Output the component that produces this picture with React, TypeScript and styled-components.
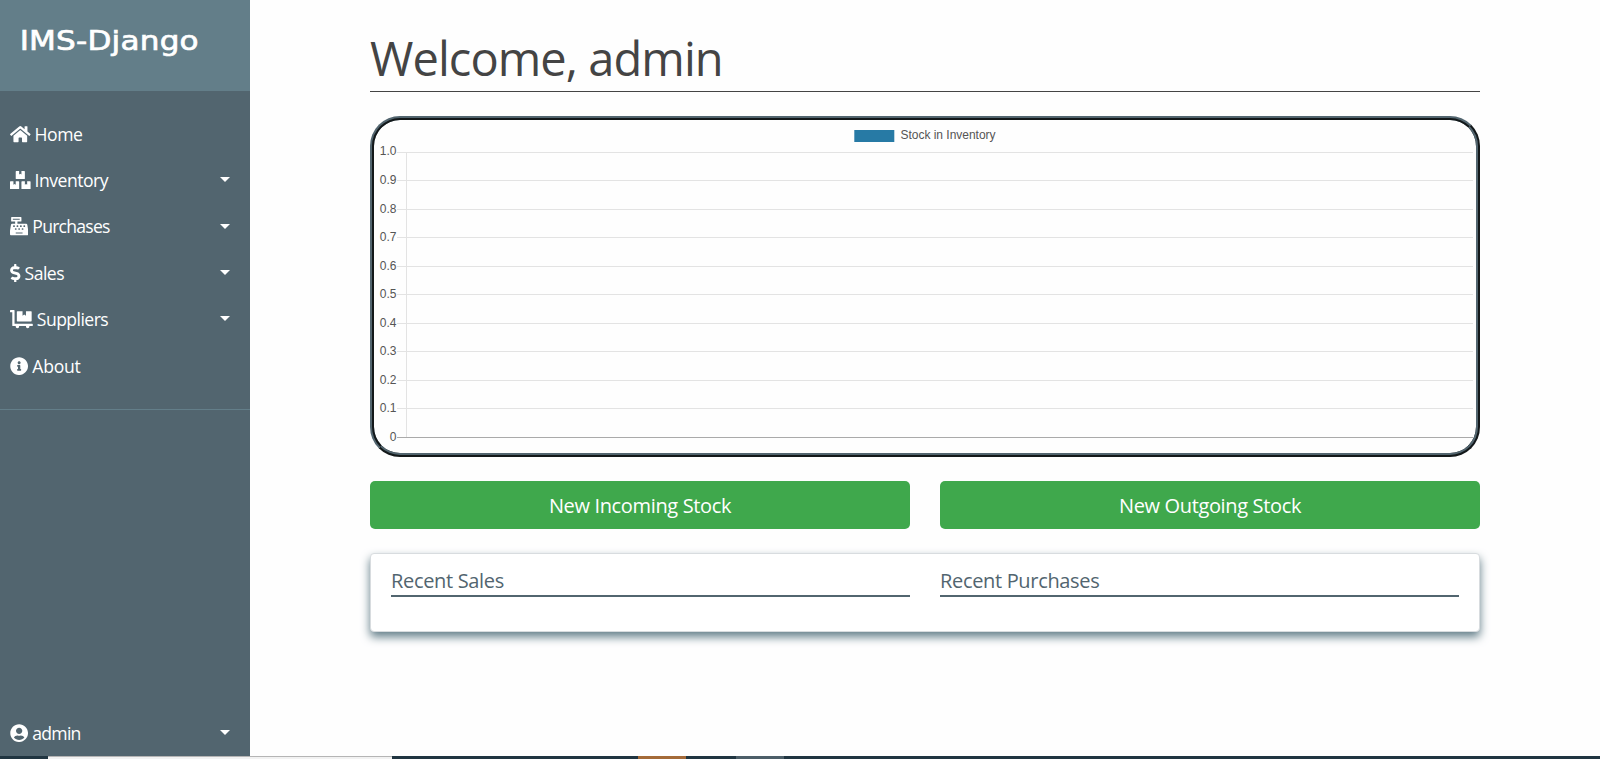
import React from "react";
import styled, { createGlobalStyle } from "styled-components";
import {
  FaHome,
  FaBoxes,
  FaCashRegister,
  FaDollarSign,
  FaDollyFlatbed,
  FaInfoCircle,
  FaUserCircle,
} from "react-icons/fa";
import type { IconType } from "react-icons";

const GlobalStyle = createGlobalStyle`
  *, *::before, *::after { box-sizing: border-box; }
  body {
    margin: 0;
    background: #fefefe;
    font-family: "Open Sans", "Noto Sans", sans-serif;
    font-size: 16px;
    line-height: 1.5;
    overflow: hidden;
  }
`;

const Screen = styled.div`
  display: flex;
  flex-direction: column;
  height: 759px;
`;

const Layout = styled.div`
  display: flex;
  height: 756px;
`;

const Sidebar = styled.nav`
  display: flex;
  flex-direction: column;
  flex: none;
  width: 250px;
  background: #52656f;
  color: #fff;
`;

const Brand = styled.header`
  flex: none;
  height: 91px;
  padding: 20px 20px 0 19px;
  background: #637e89;
`;

const BrandName = styled.h3`
  margin: 0;
  font-family: "DejaVu Sans", sans-serif;
  font-size: 27px;
  font-weight: 400;
  line-height: 42px;
  letter-spacing: 0.2px;
  white-space: nowrap;
  transform: scaleX(1.15);
  transform-origin: left center;
  text-indent: 0.6px;
  -webkit-text-stroke: 0.7px #fff;
`;

const Menu = styled.ul`
  flex: none;
  margin: 0;
  padding: 19.6px 0 20px;
  list-style: none;
  border-bottom: 1px solid #637e89;
`;

const Account = styled.ul`
  margin: auto 0 0;
  padding: 0;
  list-style: none;
`;

const MenuItem = styled.li<{ $iconWidth: number }>`
  display: flex;
  align-items: center;
  height: 46.4px;
  padding: 0 20px 0 10px;
  font-size: 17.6px;
  svg {
    flex: none;
    width: ${(p) => p.$iconWidth}px;
    height: 18.3px;
  }
`;

const MenuLabel = styled.span<{ $spacing: number }>`
  margin-left: 4px;
  letter-spacing: ${(p) => p.$spacing}px;
`;

const Caret = styled.span`
  margin: 0 0 1px auto;
  border-top: 5px solid #fff;
  border-left: 5px solid transparent;
  border-right: 5px solid transparent;
`;

const Main = styled.main`
  display: flex;
  flex-direction: column;
  flex: 1;
  padding: 24px 120px 0;
`;

const Title = styled.h1`
  height: 68px;
  margin: 0 0 24px;
  border-bottom: 1px solid #444;
  color: #444;
  font-size: 47px;
  font-weight: 400;
  line-height: 68px;
  letter-spacing: -0.93px;
`;

const ChartFrame = styled.section`
  height: 341px;
  border: 4px ridge #52656f;
  border-radius: 30px;
  overflow: hidden;
`;

const ChartSvg = styled.svg`
  display: block;
  font-family: "Liberation Sans", Arial, sans-serif;
  font-size: 12px;
  fill: #555;
`;

const Columns = styled.div`
  display: grid;
  grid-template-columns: 1fr 1fr;
  column-gap: 30px;
`;

const Actions = styled(Columns)`
  margin: 24px 0;
`;

const ActionButton = styled.button`
  height: 48px;
  padding: 1px 0 0;
  border: 0;
  border-radius: 5px;
  background: #3fa84c;
  color: #fff;
  font: 400 20px/48px "Open Sans", sans-serif;
  letter-spacing: -0.35px;
`;

const Card = styled.section`
  height: 79px;
  padding: 11px 20px 0;
  border: 1px solid #d8dcdf;
  border-radius: 4px;
  background: #fff;
  box-shadow: 0 5px 10px #637e89;
`;

const CardHeading = styled.h5`
  height: 32px;
  margin: 0;
  border-bottom: 2px solid #52656f;
  color: #52656f;
  font-size: 20px;
  font-weight: 400;
  line-height: 31px;
  letter-spacing: -0.33px;
`;

const Taskbar = styled.footer`
  display: flex;
  height: 3px;
  background: #203541;
`;

const TaskSegment = styled.span<{ $width: number; $color: string; $outlined?: boolean }>`
  flex: none;
  width: ${(p) => p.$width}px;
  background: ${(p) => p.$color};
  border-top: ${(p) => (p.$outlined ? "1px solid #b5b5b5" : "0")};
`;

interface Entry {
  label: string;
  icon: IconType;
  iconWidth: number;
  dropdown?: boolean;
  spacing: number;
}

const entries: Entry[] = [
  { label: "Home", icon: FaHome, iconWidth: 20.6, spacing: -0.5 },
  { label: "Inventory", icon: FaBoxes, iconWidth: 20.6, dropdown: true, spacing: -0.5 },
  { label: "Purchases", icon: FaCashRegister, iconWidth: 18.3, dropdown: true, spacing: -0.75 },
  { label: "Sales", icon: FaDollarSign, iconWidth: 10.5, dropdown: true, spacing: -0.5 },
  { label: "Suppliers", icon: FaDollyFlatbed, iconWidth: 22.8, dropdown: true, spacing: -0.55 },
  { label: "About", icon: FaInfoCircle, iconWidth: 18.3, spacing: -0.25 },
];

function Item({ label, icon: Icon, iconWidth, dropdown, spacing }: Entry) {
  return (
    <MenuItem $iconWidth={iconWidth}>
      <Icon />
      <MenuLabel $spacing={spacing}>{label}</MenuLabel>
      {dropdown && <Caret />}
    </MenuItem>
  );
}

const ticks = ["1.0", "0.9", "0.8", "0.7", "0.6", "0.5", "0.4", "0.3", "0.2", "0.1", "0"];

function StockChart() {
  return (
    <ChartSvg width="1102" height="333" viewBox="0 0 1102 333">
      <rect x="480.3" y="10" width="40" height="12" fill="#277aa5" />
      <text x="526.5" y="19" textLength="95">Stock in Inventory</text>
      {ticks.map((tick, i) => {
        const y = Math.floor(32 + 28.5 * i);
        const last = i === ticks.length - 1;
        return (
          <g key={tick}>
            <rect x="23" y={y} width="1076" height="1" fill={last ? "#aaa" : "#e3e3e3"} />
            <text x="22.5" y={i === 0 ? y + 3 : y + 4} textAnchor="end">{tick}</text>
          </g>
        );
      })}
      <rect x="32" y="32" width="1" height="285" fill="#e3e3e3" />
    </ChartSvg>
  );
}

export default function App() {
  return (
    <Screen>
      <GlobalStyle />
      <Layout>
        <Sidebar>
          <Brand>
            <BrandName>IMS-Django</BrandName>
          </Brand>
          <Menu>
            {entries.map((entry) => (
              <Item key={entry.label} {...entry} />
            ))}
          </Menu>
          <Account>
            <Item label="admin" icon={FaUserCircle} iconWidth={18.3} dropdown spacing={-0.75} />
          </Account>
        </Sidebar>
        <Main>
          <Title>Welcome, admin</Title>
          <ChartFrame>
            <StockChart />
          </ChartFrame>
          <Actions>
            <ActionButton>New Incoming Stock</ActionButton>
            <ActionButton>New Outgoing Stock</ActionButton>
          </Actions>
          <Card>
            <Columns>
              <CardHeading>Recent Sales</CardHeading>
              <CardHeading>Recent Purchases</CardHeading>
            </Columns>
          </Card>
        </Main>
      </Layout>
      <Taskbar>
        <TaskSegment $width={48} $color="#203541" />
        <TaskSegment $width={344} $color="#f2f2f2" $outlined />
        <TaskSegment $width={246} $color="#203541" />
        <TaskSegment $width={48} $color="#a46a38" />
        <TaskSegment $width={50} $color="#203541" />
        <TaskSegment $width={48} $color="#4c5e68" />
      </Taskbar>
    </Screen>
  );
}
